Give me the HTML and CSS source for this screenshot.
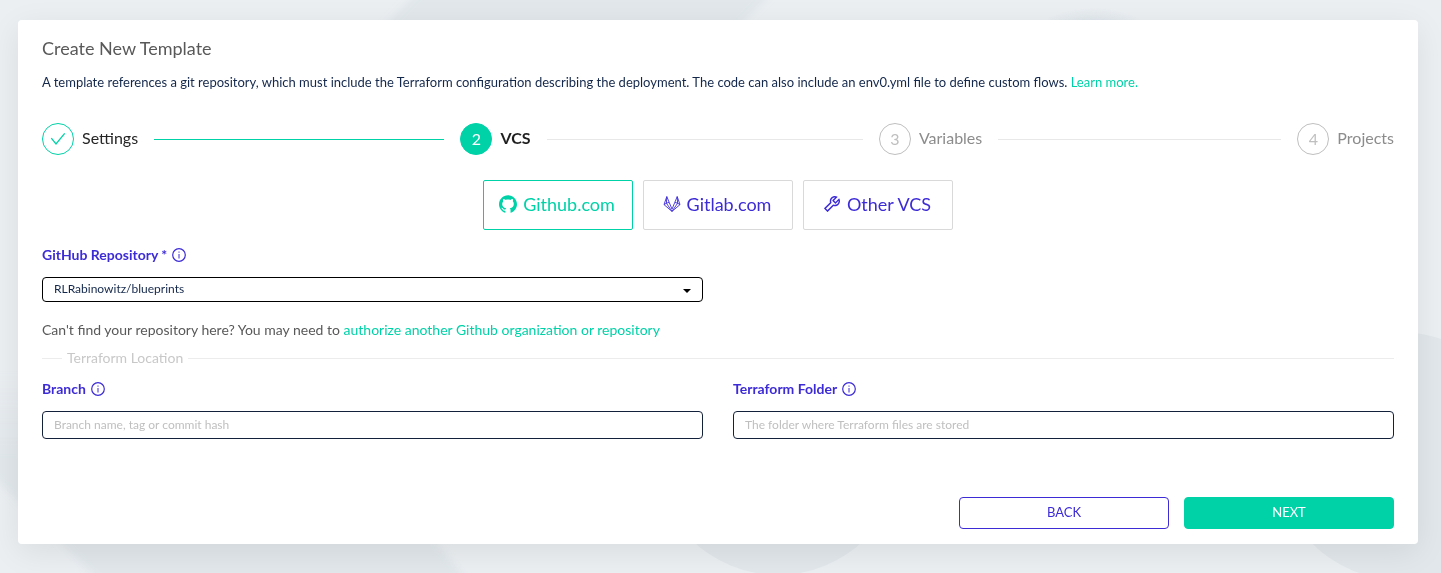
FILE: index.html
```html
<!DOCTYPE html>
<html lang="en">

<head>
    <meta charset="UTF-8">
    <meta name="viewport" content="width=device-width, initial-scale=1.0">
    <title>Create New Template</title>
    <link rel="stylesheet" href="styles.css">
</head>

<body>
    <svg class="backdrop" viewBox="0 0 1441 573" preserveAspectRatio="xMidYMid slice" aria-hidden="true">
        <defs>
            <linearGradient id="fade" x1="0" y1="0" x2="0" y2="1">
                <stop offset="0" stop-color="#e1e7eb" stop-opacity="0"></stop>
                <stop offset="0.4" stop-color="#e1e7eb"></stop>
            </linearGradient>
            <radialGradient id="glow">
                <stop offset="0.5" stop-color="#d3dde4"></stop>
                <stop offset="1" stop-color="#d3dde4" stop-opacity="0"></stop>
            </radialGradient>
            <filter id="soft">
                <feGaussianBlur stdDeviation="3"></feGaussianBlur>
            </filter>
        </defs>
        <path d="M420 -10H775L700 65H345z" fill="#e1e7eb" filter="url(#soft)"></path>
        <path d="M-20 375L300 375L469 583H102L-20 464z" fill="url(#fade)" filter="url(#soft)"></path>
        <circle cx="778" cy="451" r="124" fill="#e1e7eb"></circle>
        <circle cx="1400" cy="456" r="124" fill="#e1e7eb"></circle>
        <ellipse cx="1093" cy="60" rx="76" ry="52" fill="url(#glow)"></ellipse>
    </svg>

    <main class="card">
        <h1>Create New Template</h1>
        <p class="description">A template references a git repository, which must include the Terraform configuration describing the deployment. The code can also include an env0.yml file to define custom flows. <a href="#">Learn more.</a></p>

        <ol class="steps">
            <li class="step done">
                <span class="step-icon">
                    <svg width="16" height="16" viewBox="0 0 16 16" fill="none" stroke="currentColor" stroke-width="1.3"><path d="M1.3 7.2L6 13L14.7 2.3"></path></svg>
                </span>
                <span class="step-title">Settings</span>
            </li>
            <li class="step active">
                <span class="step-icon">2</span>
                <span class="step-title">VCS</span>
            </li>
            <li class="step">
                <span class="step-icon">3</span>
                <span class="step-title">Variables</span>
            </li>
            <li class="step">
                <span class="step-icon">4</span>
                <span class="step-title">Projects</span>
            </li>
        </ol>

        <div class="providers">
            <button type="button" class="provider selected">
                <svg viewBox="64 64 896 896" fill="currentColor"><path d="M511.6 76.3C264.3 76.2 64 276.4 64 523.5 64 718.9 189.3 885 363.8 946c23.5 5.9 19.9-10.8 19.9-22.2v-77.5c-135.7 15.9-141.2-73.9-150.3-88.9C215 726 171.5 718 184.5 703c30.9-15.9 62.4 4 98.9 57.9 26.4 39.1 77.9 32.5 104 26 5.7-23.5 17.9-44.5 34.7-60.8-140.6-25.2-199.2-111-199.2-213 0-49.5 16.3-95 48.3-131.7-20.4-60.5 1.9-112.3 4.9-120 58.1-5.2 118.5 41.6 123.2 45.3 33-8.9 70.7-13.6 112.9-13.6 42.4 0 80.2 4.9 113.5 13.9 11.3-8.6 67.3-48.8 121.3-43.9 2.9 7.7 24.7 58.3 5.5 118 32.4 36.8 48.9 82.7 48.9 132.3 0 102.2-59 188.1-200 212.9a127.5 127.5 0 0138.1 91v112.5c.8 9 0 17.9 15 17.9 177.1-59.7 304.6-227 304.6-424.1 0-247.2-200.4-447.3-447.5-447.3z"></path></svg>
                Github.com
            </button>
            <button type="button" class="provider">
                <svg viewBox="0 0 18 18" fill="none" stroke="currentColor" stroke-width="0.9" stroke-linejoin="round"><path d="M1 9.6L3.8 1.6L6.2 7.4L9 14.2L11.8 7.4L14.2 1.6L17 9.6L9 16.4zM3.8 1.6L3.4 8.2L9 16.4L14.6 8.2L14.2 1.6M1 9.6L3.4 8.2L6.2 7.4M17 9.6L14.6 8.2L11.8 7.4"></path></svg>
                Gitlab.com
            </button>
            <button type="button" class="provider">
                <svg viewBox="64 64 896 896" fill="currentColor"><path d="M876.6 239.5c-.5-.9-1.2-1.8-2-2.5-5-5-13.1-5-18.1 0L684.2 409.3l-67.9-67.9L788.7 169c.8-.8 1.4-1.6 2-2.5 3.6-6.1 1.6-13.9-4.5-17.5-98.2-58-226.8-44.7-311.3 39.7-67 67-89.2 162-66.5 247.4l-293 293c-3 3-2.8 7.9.3 11l169.7 169.7c3.1 3.1 8.1 3.3 11 .3l292.9-292.9c85.5 22.8 180.5.7 247.6-66.4 84.4-84.5 97.7-213.1 39.7-311.3zM786 499.8c-58.1 58.1-145.3 69.3-214.6 33.6l-8.8 8.8-.1-.1-274 274.1-79.2-79.2 230.1-230.1s0 .1.1.1l52.8-52.8c-35.7-69.3-24.5-156.5 33.6-214.6a184.2 184.2 0 01144-53.5L537 318.9a32.05 32.05 0 000 45.3l124.5 124.5a32.05 32.05 0 0045.3 0l132.8-132.8c3.7 51.8-14.4 104.8-53.6 143.9z"></path></svg>
                Other VCS
            </button>
        </div>

        <form id="templateForm">
            <div class="form-row">
                <div class="form-group">
                    <label for="repository">GitHub Repository *
                        <svg class="info" viewBox="0 0 14 14" fill="none" stroke="currentColor"><circle cx="7" cy="7" r="6.3" stroke-width="1.2"></circle><path d="M7 6v4.5M7 3.5v1.2"></path></svg>
                    </label>
                    <div class="select-box">
                        <select id="repository" name="repository">
                            <option>RLRabinowitz/blueprints</option>
                        </select>
                        <svg class="caret" width="8" height="4" viewBox="0 0 8 4"><path d="M0 0h8L4 4z"></path></svg>
                    </div>
                </div>
            </div>

            <p class="hint">Can't find your repository here? You may need to <a href="#">authorize another Github organization or repository</a></p>

            <div class="divider">Terraform Location</div>

            <div class="form-row">
                <div class="form-group">
                    <label for="branch">Branch
                        <svg class="info" viewBox="0 0 14 14" fill="none" stroke="currentColor"><circle cx="7" cy="7" r="6.3" stroke-width="1.2"></circle><path d="M7 6v4.5M7 3.5v1.2"></path></svg>
                    </label>
                    <input type="text" id="branch" name="branch" placeholder="Branch name, tag or commit hash">
                </div>
                <div class="form-group">
                    <label for="folder">Terraform Folder
                        <svg class="info" viewBox="0 0 14 14" fill="none" stroke="currentColor"><circle cx="7" cy="7" r="6.3" stroke-width="1.2"></circle><path d="M7 6v4.5M7 3.5v1.2"></path></svg>
                    </label>
                    <input type="text" id="folder" name="folder" placeholder="The folder where Terraform files are stored">
                </div>
            </div>

            <div class="actions">
                <button type="button" class="btn">BACK</button>
                <button type="submit" class="btn btn-primary">NEXT</button>
            </div>
        </form>
    </main>
</body>

</html>
```
FILE: styles.css
```css
* {
    box-sizing: border-box;
}

body {
    font-family: Lato, sans-serif;
    font-size: 14px;
    line-height: 20px;
    color: #595959;
    background-color: #ebeff2;
    margin: 0;
    padding: 20px 23px 29px 18px;
}

a {
    color: #00d2a8;
    text-decoration: none;
}

.backdrop {
    position: fixed;
    top: 0;
    left: 0;
    width: 100%;
    height: 100%;
    z-index: -1;
}

.card {
    background: #fff;
    padding: 16px 24px 15px;
    border-radius: 4px;
    box-shadow: 0 8px 32px rgba(0, 0, 0, 0.08);
}

h1 {
    margin: 0;
    font-size: 18px;
    font-weight: normal;
    line-height: 24px;
}

.description {
    margin: 12px 0 31px;
    font-size: 13px;
    color: #14284b;
}

/* Steps */
.steps {
    display: flex;
    gap: 16px;
    margin: 0 0 25px;
    padding: 0;
    list-style: none;
}

.step {
    display: flex;
    flex: 1;
    align-items: center;
    font-size: 16px;
    color: #8c8c8c;
}

.step:last-child {
    flex: none;
}

.step:not(:last-child)::after {
    content: "";
    flex: 1;
    height: 1px;
    margin-left: 16px;
    background: #e8e8e8;
}

.step-icon {
    display: flex;
    justify-content: center;
    align-items: center;
    width: 32px;
    height: 32px;
    margin-right: 8px;
    border: 1px solid #bfbfbf;
    border-radius: 50%;
    color: #bfbfbf;
}

.step-title {
    padding-bottom: 2px;
}

.step.done .step-icon {
    border-color: #00d2a8;
    color: #00d2a8;
}

.step.done .step-title {
    color: #262626;
}

.step.done::after {
    background: #00d2a8;
}

.step.active .step-icon {
    background: #00d2a8;
    border-color: #00d2a8;
    color: #fff;
}

.step.active .step-title {
    font-weight: bold;
    color: #1f1f1f;
}

/* VCS providers */
.providers {
    display: flex;
    justify-content: center;
    gap: 10px;
    margin-bottom: 15px;
}

.provider {
    display: flex;
    justify-content: center;
    align-items: center;
    gap: 6px;
    width: 150px;
    height: 50px;
    padding: 0 2px 2px 0;
    background: #fff;
    border: 1px solid #d9d9d9;
    border-radius: 2px;
    font-family: inherit;
    font-size: 18px;
    color: #3d2bd6;
    cursor: pointer;
}

.provider svg {
    width: 18px;
    height: 18px;
}

.provider.selected {
    border-color: #00d2a8;
    color: #00d2a8;
}

/* Form */
.form-row {
    display: grid;
    grid-template-columns: 1fr 1fr;
    gap: 30px;
}

.form-group label {
    display: flex;
    align-items: center;
    gap: 5px;
    margin-bottom: 12px;
    font-weight: bold;
    color: #3d2bd6;
}

.info {
    width: 14px;
    height: 14px;
}

.form-group input,
.form-group select {
    display: block;
    width: 100%;
    height: 28px;
    padding: 0 11px 2px;
    background: #fff;
    border: 1px solid #14213a;
    border-radius: 4px;
    font-family: inherit;
    font-size: 12px;
    color: #14284b;
}

.form-group select {
    height: 25px;
    border-color: #000;
    appearance: none;
}

.form-group input::placeholder {
    color: #bfbfbf;
}

.select-box {
    position: relative;
}

.caret {
    position: absolute;
    top: 12px;
    right: 12px;
    pointer-events: none;
}

.hint {
    margin: 18px 0 8px;
}

.divider {
    display: flex;
    align-items: center;
    gap: 5px;
    margin-bottom: 11px;
    color: #c8c8c8;
}

.divider::before,
.divider::after {
    content: "";
    width: 20px;
    height: 1px;
    background: #ececec;
}

.divider::after {
    flex: 1;
}

.actions {
    display: flex;
    justify-content: flex-end;
    gap: 15px;
    margin-top: 58px;
}

.btn {
    width: 210px;
    height: 32px;
    padding: 0 0 2px;
    background: #fff;
    border: 1px solid #3d2bd6;
    border-radius: 4px;
    font-family: inherit;
    font-size: 13px;
    color: #3d2bd6;
    cursor: pointer;
}

.btn-primary {
    background: #00d2a8;
    border-color: #00d2a8;
    color: #fff;
}
```
